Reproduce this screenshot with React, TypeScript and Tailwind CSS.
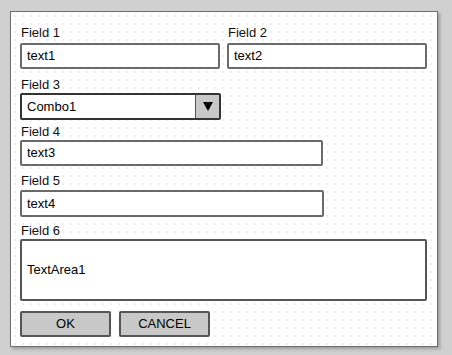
export default function App() {
  const input = 'h-[26px] border-2 border-[#6a6a6a] rounded-[2px] bg-white flex items-center pl-[5px] text-[13px] text-black'
  const label = 'h-[16px] leading-[16px] text-[13px] text-[#111] pl-[1px]'

  return (
    <div className="w-[452px] h-[355px] bg-[#d0d0d0] pt-[11px] pl-[10px]" style={{ fontFamily: '"Liberation Sans", Arial, sans-serif' }}>
      <div className="w-[428px] h-[336px] border border-[#6e6e6e] bg-white bg-[radial-gradient(circle,#ededed_1px,transparent_1.2px)] bg-[length:8px_8px] shadow-[2px_2px_3px_rgba(0,0,0,0.25)] pl-[9px] pt-[13px]">
        {/* row 1 */}
        <div className="flex gap-[7px]">
          <div className="w-[200px]">
            <div className={label}>Field 1</div>
            <div className={`${input} mt-[2px]`}>text1</div>
          </div>
          <div className="w-[200px]">
            <div className={label}>Field 2</div>
            <div className={`${input} mt-[2px]`}>text2</div>
          </div>
        </div>

        {/* combo */}
        <div className="mt-[8px]">
          <div className={label}>Field 3</div>
          <div className="w-[201px] h-[27px] border-2 border-[#333] rounded-[2px] bg-white flex items-stretch">
            <div className="flex-1 flex items-center pl-[5px] text-[13px]">Combo1</div>
            <div className="w-[24px] bg-[#c8c8c8] border-l border-[#555] flex items-center justify-center">
              <svg width="10" height="9" viewBox="0 0 10 9">
                <path d="M0 0 L10 0 L5 9 Z" fill="#000" />
              </svg>
            </div>
          </div>
        </div>

        <div className="mt-[4px]">
          <div className={label}>Field 4</div>
          <div className={`${input} w-[303px]`}>text3</div>
        </div>

        <div className="mt-[7px]">
          <div className={label}>Field 5</div>
          <div className={`${input} w-[304px] h-[27px] mt-[1px]`}>text4</div>
        </div>

        <div className="mt-[6px]">
          <div className={label}>Field 6</div>
          <div className="w-[407px] h-[62px] border-2 border-[#555] rounded-[2px] bg-white flex items-center pl-[5px] text-[13px]">
            TextArea1
          </div>
        </div>

        <div className="mt-[10px] flex gap-[8px]">
          <button className="w-[91px] h-[26px] bg-[#c8c8c8] border-2 border-[#555] rounded-[2px] text-[13px] text-black">OK</button>
          <button className="w-[91px] h-[26px] bg-[#c8c8c8] border-2 border-[#555] rounded-[2px] text-[13px] text-black">CANCEL</button>
        </div>
      </div>
    </div>
  )
}
